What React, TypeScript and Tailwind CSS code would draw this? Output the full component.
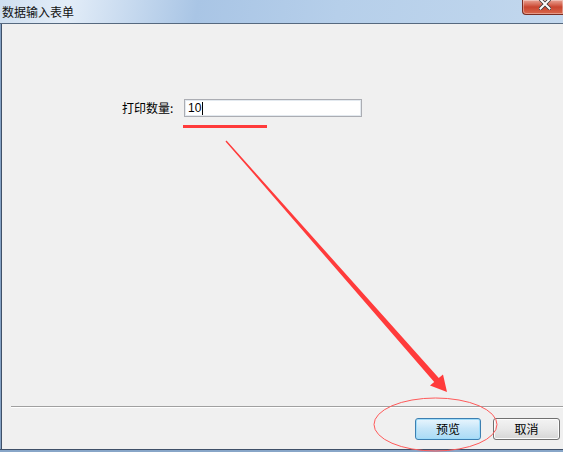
import React from "react";

const cjk = "font-['SimSun','Noto_Sans_CJK_SC',sans-serif]";

function CloseButton() {
  return (
    <div className="relative w-[41px] h-[15px] rounded-bl-[4px] border-l border-b border-[#7a2d22] bg-gradient-to-b from-[#e9a394] via-[#c9452f] to-[#d8674c] shadow-[inset_0_0_0_1px_rgba(255,255,255,0.35)]">
      <svg className="absolute left-[16px] top-[-1px]" width="12" height="11" viewBox="0 0 12 11">
        <path d="M1.5 0.5 L10.5 9.5 M10.5 0.5 L1.5 9.5" stroke="#3b3b3b" strokeWidth="3.6" strokeLinecap="square" />
        <path d="M1.5 0.5 L10.5 9.5 M10.5 0.5 L1.5 9.5" stroke="#ffffff" strokeWidth="2" strokeLinecap="square" />
      </svg>
    </div>
  );
}

function Annotations() {
  return (
    <svg className="absolute inset-0 pointer-events-none" width="563" height="452" viewBox="0 0 563 452">
      <rect x="183" y="125" width="84" height="3" fill="#ff3b3b" />
      <polygon
        points="225.5,141.4 434.2,382 430,385.5 447,392 443,374.5 438.8,378 226.5,140.6"
        fill="#ff3b3b"
      />
      <ellipse cx="435.5" cy="424.5" rx="61.5" ry="26.5" fill="none" stroke="#ff5a5a" strokeWidth="1" />
    </svg>
  );
}

export default function App() {
  return (
    <div className={`relative w-[563px] h-[452px] overflow-hidden flex flex-col bg-[#f0f0f0] text-black ${cjk}`}>
      {/* title bar */}
      <div className="h-[23px] flex items-start justify-between bg-[linear-gradient(100deg,#cfdff0_0%,#e3edf8_12%,#a9c5e5_35%,#b6cfea_60%,#bdd4ec_85%,#c3d8ee_100%)]">
        <span className="pl-[2px] pt-[5px] text-[12px] leading-[13px] text-[#111]">数据输入表单</span>
        <CloseButton />
      </div>
      <div className="h-px bg-[#56697f]" />

      {/* body */}
      <div className="flex-1 flex border-l border-[#84a1c4]">
        <div className="flex-1 flex flex-col border-l border-[#3f5068]">
          <div className="pt-[75px] pl-[120px] flex items-center">
            <span className="w-[62px] text-[12px] leading-[18px]">打印数量:</span>
            <div className="w-[178px] h-[18px] border border-[#abadb3] bg-white flex items-center pl-[3px] shadow-[inset_0_0_0_1px_#e3e9ef]">
              <span className="font-['Liberation_Sans',sans-serif] text-[12px] leading-[14px]">10</span>
              <span className="ml-[1px] w-px h-[13px] bg-black" />
            </div>
          </div>

          <div className="flex-1" />

          <div className="ml-[9px] h-px bg-[#a0a0a0]" />
          <div className="ml-[9px] h-px bg-white" />

          <div className="mt-[10px] mb-[9px] flex justify-end gap-[12px] pr-[3px]">
            <button className="w-[66px] h-[22px] rounded-[3px] border border-[#3c7fb1] bg-gradient-to-b from-[#e8f5fd] via-[#c4e5f8] to-[#a9dbf6] text-[12px] leading-[20px] shadow-[inset_0_0_0_1px_#9fdcfa]">
              预览
            </button>
            <button className="w-[67px] h-[22px] rounded-[3px] border border-[#707070] bg-gradient-to-b from-[#f3f3f3] via-[#e8e8e8] to-[#d6d6d6] text-[12px] leading-[20px] shadow-[inset_0_0_0_1px_#fcfcfc]">
              取消
            </button>
          </div>
        </div>
      </div>

      {/* bottom frame */}
      <div className="h-px bg-[#3f5068]" />
      <div className="h-[2px] bg-[#88a6c8]" />

      <Annotations />
    </div>
  );
}
